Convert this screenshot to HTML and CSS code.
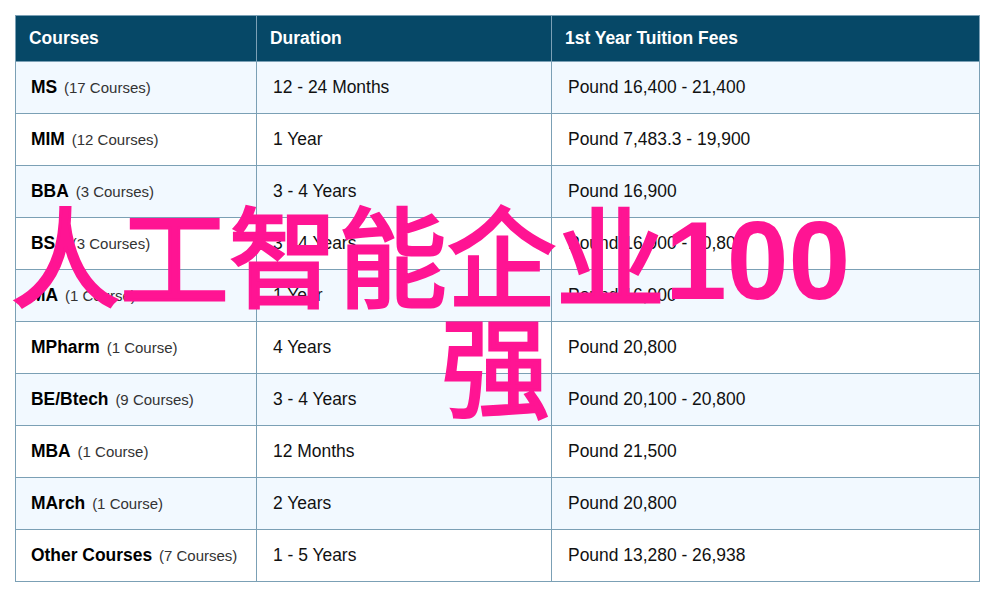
FILE: index.html
```html
<!DOCTYPE html>
<html lang="zh">
<head>
<meta charset="utf-8">
<title>Courses</title>
<link rel="stylesheet" href="styles.css">
</head>
<body>
<table class="fees">
<colgroup><col class="c1"><col class="c2"><col class="c3"></colgroup>
<thead><tr><th>Courses</th><th>Duration</th><th>1st Year Tuition Fees</th></tr></thead>
<tbody>
<tr><td><b>MS</b> <span class="n">(17 Courses)</span></td><td>12 - 24 Months</td><td>Pound 16,400 - 21,400</td></tr>
<tr><td><b>MIM</b> <span class="n">(12 Courses)</span></td><td>1 Year</td><td>Pound 7,483.3 - 19,900</td></tr>
<tr><td><b>BBA</b> <span class="n">(3 Courses)</span></td><td>3 - 4 Years</td><td>Pound 16,900</td></tr>
<tr><td><b>BSc</b> <span class="n">(3 Courses)</span></td><td>3 - 4 Years</td><td>Pound 16,900 - 20,800</td></tr>
<tr><td><b>MA</b> <span class="n">(1 Course)</span></td><td>1 Year</td><td>Pound 16,900</td></tr>
<tr><td><b>MPharm</b> <span class="n">(1 Course)</span></td><td>4 Years</td><td>Pound 20,800</td></tr>
<tr><td><b>BE/Btech</b> <span class="n">(9 Courses)</span></td><td>3 - 4 Years</td><td>Pound 20,100 - 20,800</td></tr>
<tr><td><b>MBA</b> <span class="n">(1 Course)</span></td><td>12 Months</td><td>Pound 21,500</td></tr>
<tr><td><b>MArch</b> <span class="n">(1 Course)</span></td><td>2 Years</td><td>Pound 20,800</td></tr>
<tr><td><b>Other Courses</b> <span class="n">(7 Courses)</span></td><td>1 - 5 Years</td><td>Pound 13,280 - 26,938</td></tr>
</tbody>
</table>
<div class="stamp"><div class="stamp-top">人工智能企业<span class="digits">100</span></div><div class="stamp-end">强</div></div>
</body>
</html>
```
FILE: styles.css
```css
html, body { margin: 0; padding: 0; background: #fff; }
body { width: 991px; height: 597px; overflow: hidden; position: relative; padding: 15px; box-sizing: border-box; font-family: "Liberation Sans", Arial, sans-serif; }
.fees { border-collapse: collapse; table-layout: fixed; width: 964px; font-size: 17.45px; color: #111; }
.c1 { width: 241px; }
.c2 { width: 295px; }
.c3 { width: 428px; }
.fees th, .fees td { border: 1px solid #7ba0b5; text-align: left; padding: 0; }
.fees th { height: 45px; background: #064867; color: #fff; font-weight: bold; padding-left: 13px; }
.fees td { height: 51px; padding-left: 16px; }
.fees td:first-child { padding-left: 15px; }
.fees tbody tr:nth-child(odd) td { background: #f2f9ff; }
.fees b { font-weight: bold; color: #000; margin-right: 2px; }
.n { font-size: 15px; color: #333; }
.stamp { position: absolute; left: 11px; right: 0; top: 197px; font-family: "Noto Sans CJK SC", "Liberation Sans", sans-serif; font-size: 109px; font-weight: 400; line-height: 110px; color: #ff1493; -webkit-text-stroke: 3px #ff1493; white-space: nowrap; }
.digits { font-family: "Liberation Sans", sans-serif; font-size: 111px; font-weight: bold; line-height: 0; -webkit-text-stroke: 0; }
.stamp-end { text-align: center; padding-right: 11px; }
```
